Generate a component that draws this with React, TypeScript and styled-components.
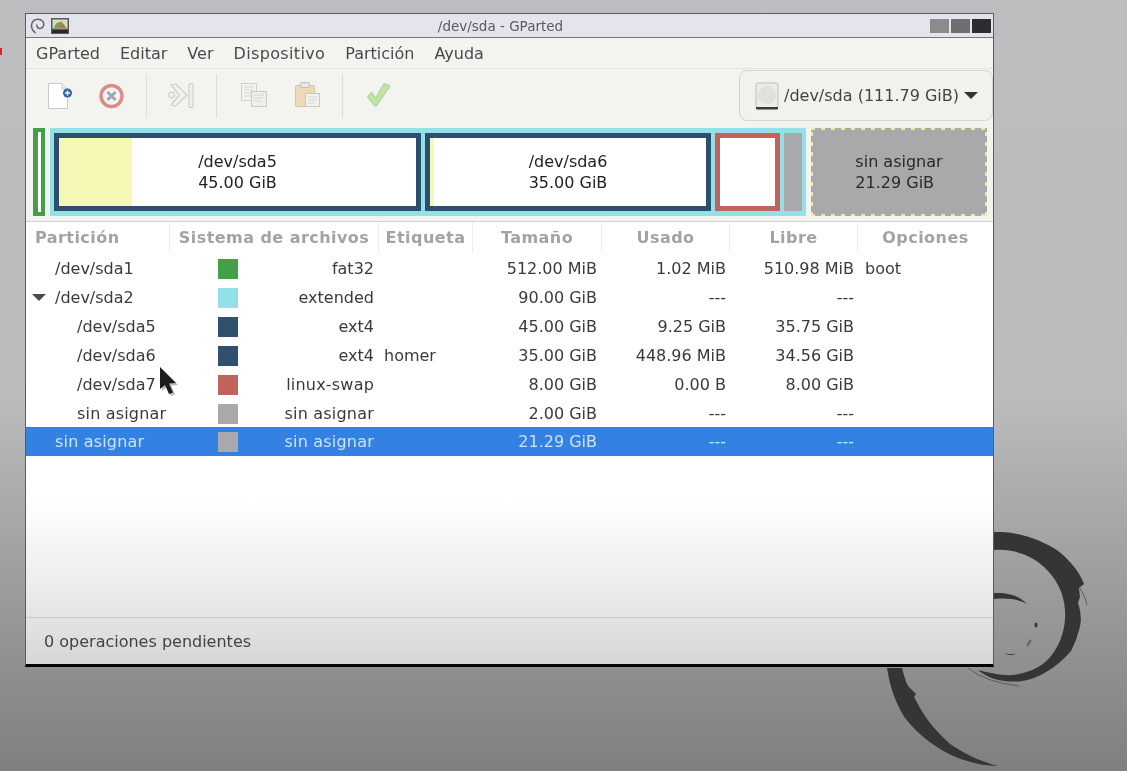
import React from "react";
import styled, { createGlobalStyle } from "styled-components";

const Global = createGlobalStyle`
  html, body { margin: 0; padding: 0; height: 100%; overflow: hidden; background: #999; }
  #root { height: 100%; }
  * { box-sizing: border-box; }
`;

const Desktop = styled.div`
  position: relative;
  height: 771px;
  padding: 13px 0 0 25px;
  background: linear-gradient(#bdbcbe 0, #bbbabc 52%, #7f7f7f 100%);
  font-family: "DejaVu Sans", sans-serif;
  font-size: 16px;
  overflow: hidden;
  filter: blur(0.35px);
`;

const Swirl = styled.svg`
  position: absolute;
  left: 880px;
  top: 520px;
  width: 230px;
  height: 251px;
`;

const RedMark = styled.div`
  position: absolute;
  left: 0;
  top: 48px;
  width: 2px;
  height: 7px;
  background: #e0202a;
`;

const Win = styled.div`
  position: relative;
  width: 969px;
  height: 654px;
  display: flex;
  flex-direction: column;
  border: 1px solid #5c5c5c;
  border-bottom: 3px solid #050505;
  background: #f3f3f0;
`;

const TitleBar = styled.div`
  height: 24px;
  flex: none;
  display: flex;
  align-items: center;
  padding: 0 2px 0 4px;
  background: #e4e4ee;
  border-bottom: 1px solid #777;
`;

const TitleIcons = styled.div`
  display: flex;
  align-items: center;
  gap: 6px;
  width: 200px;
`;

const TitleText = styled.div`
  flex: 1;
  text-align: center;
  font-size: 13.5px;
  color: #5a5a5a;
`;

const WinButtons = styled.div`
  width: 220px;
  display: flex;
  justify-content: flex-end;
  gap: 2px;
`;

const WinButton = styled.div<{ $c: string }>`
  width: 19px;
  height: 14px;
  background: ${(p) => p.$c};
`;

const MenuBar = styled.div`
  height: 31px;
  flex: none;
  display: flex;
  align-items: center;
  gap: 20px;
  padding: 1px 0 0 10px;
  color: #4a4a4a;
  border-bottom: 1px solid #e2e2de;
`;

const MenuItem = styled.span<{ $track?: number }>`
  letter-spacing: ${(p) => p.$track ?? 0}px;
`;

const Toolbar = styled.div`
  height: 54px;
  flex: none;
  display: flex;
  align-items: flex-start;
  padding: 0 0 0 9px;
`;

const ToolGroup = styled.div`
  display: flex;
  gap: 3px;
  height: 50px;
  margin-left: 2px;
`;

const ToolButton = styled.div`
  width: 51px;
  height: 54px;
  display: flex;
  align-items: center;
  justify-content: center;
`;

const Sep = styled.div`
  width: 1px;
  height: 44px;
  margin: 5px 9px 0;
  background: #dcdcd8;
`;

const Combo = styled.div`
  margin-left: auto;
  margin-top: 1px;
  width: 254px;
  height: 51px;
  display: flex;
  align-items: center;
  gap: 5px;
  padding-left: 15px;
  border: 1px solid #d6d6d1;
  border-radius: 8px;
  background: #f1f1ee;
  color: #444;
  white-space: nowrap;
`;

const ComboArrow = styled.div`
  width: 0;
  height: 0;
  border-left: 7px solid transparent;
  border-right: 7px solid transparent;
  border-top: 7px solid #333;
`;

const BarArea = styled.div`
  height: 99px;
  flex: none;
  display: flex;
  align-items: flex-start;
  padding: 5px 0 0 7px;
  border-bottom: 1px solid #d4d4d0;
`;

const Primary = styled.div`
  width: 12px;
  height: 88px;
  border: 4px solid #43a047;
  border-left-width: 5px;
  background: #fff;
`;

const Extended = styled.div`
  margin-left: 5px;
  width: 756px;
  height: 88px;
  display: flex;
  gap: 4px;
  padding: 5px 4px;
  background: #93e0e6;
`;

const Part = styled.div<{ $w: number; $c: string }>`
  position: relative;
  width: ${(p) => p.$w}px;
  height: 78px;
  border: 5px solid ${(p) => p.$c};
  background: #fff;
  display: flex;
`;

const UsedFill = styled.div<{ $w: number }>`
  width: ${(p) => p.$w}px;
  background: #f7f7b6;
  flex: none;
`;

const PartLabel = styled.div<{ $shift: number }>`
  flex: 1;
  margin-left: ${(p) => -p.$shift}px;
  display: flex;
  justify-content: center;
  align-items: center;
  color: #222;
  line-height: 21px;
`;

const LabelLines = styled.div`
  text-align: left;
`;

const GrayChunk = styled.div`
  width: 18px;
  height: 78px;
  background: #a9a9ab;
`;

const Unalloc = styled.div`
  margin-left: 5px;
  width: 176px;
  height: 88px;
  display: flex;
  align-items: center;
  justify-content: center;
  line-height: 21px;
  color: #2a2a2a;
  background-color: #a9a9ab;
  background-image:
    repeating-linear-gradient(90deg, #eeeaa6 0 4px, transparent 4px 10px),
    repeating-linear-gradient(90deg, #eeeaa6 0 4px, transparent 4px 10px),
    repeating-linear-gradient(0deg, #eeeaa6 0 4px, transparent 4px 10px),
    repeating-linear-gradient(0deg, #eeeaa6 0 4px, transparent 4px 10px);
  background-size: 100% 2px, 100% 2px, 2px 100%, 2px 100%;
  background-position: 0 0, 0 100%, 0 0, 100% 0;
  background-repeat: no-repeat;
`;

const COLS = "144px 209px 94px 129px 128px 128px 135px";

const HeaderRow = styled.div`
  height: 32px;
  flex: none;
  display: grid;
  grid-template-columns: ${COLS};
  padding-bottom: 1px;
  background: #fff;
  font-weight: 700;
  color: #a3a3a3;
  letter-spacing: 0.45px;
`;

const HeadCell = styled.div<{ $left?: boolean }>`
  display: flex;
  align-items: center;
  justify-content: ${(p) => (p.$left ? "flex-start" : "center")};
  padding-left: ${(p) => (p.$left ? "9px" : "0")};
  border-right: 1px solid #ececec;
  white-space: nowrap;
  &:last-child { border-right: 0; }
`;

const List = styled.div`
  flex: 1;
  min-height: 0;
  background: linear-gradient(#fff 0, #fff 68%, #e5e5e3 100%);
`;

const Row = styled.div<{ $sel?: boolean }>`
  height: 29px;
  margin-top: ${(p) => (p.$sel ? "-1px" : "0")};
  display: grid;
  grid-template-columns: ${COLS};
  align-items: center;
  color: ${(p) => (p.$sel ? "#cfe2fa" : "#3a3a3a")};
  background: ${(p) => (p.$sel ? "#3381e3" : "transparent")};
`;

const NameCell = styled.div<{ $depth: number }>`
  position: relative;
  padding-left: ${(p) => (p.$depth ? 51 : 29)}px;
  white-space: nowrap;
`;

const Expander = styled.div`
  position: absolute;
  left: 6px;
  top: 6px;
  width: 0;
  height: 0;
  border-left: 7px solid transparent;
  border-right: 7px solid transparent;
  border-top: 7px solid #4a4a4a;
`;

const FsCell = styled.div`
  display: flex;
  align-items: center;
  justify-content: space-between;
  padding: 0 5px 0 48px;
`;

const Swatch = styled.div<{ $c: string }>`
  width: 20px;
  height: 20px;
  background: ${(p) => p.$c};
`;

const FsName = styled.span<{ $track: number }>`
  letter-spacing: ${(p) => p.$track}px;
`;

const UnallocName = styled.span`
  letter-spacing: 0.18px;
`;

const LabelCell = styled.div`
  padding-left: 5px;
`;

const NumCell = styled.div<{ $pad: number }>`
  text-align: right;
  padding-right: ${(p) => p.$pad}px;
  white-space: nowrap;
`;

const FlagCell = styled.div`
  padding-left: 7px;
`;

const StatusBar = styled.div`
  height: 47px;
  flex: none;
  display: flex;
  align-items: center;
  padding-left: 18px;
  color: #444;
  border-top: 1px solid #c9c9c5;
  background: linear-gradient(#e4e4e2, #d6d6d4);
`;

const Pointer = styled.svg`
  position: absolute;
  left: 133px;
  top: 352px;
  width: 24px;
  height: 32px;
`;

const rows = [
  { n: "/dev/sda1", d: 0, c: "#43a047", fs: "fat32", l: "", s: "512.00 MiB", u: "1.02 MiB", f: "510.98 MiB", o: "boot" },
  { n: "/dev/sda2", d: 0, e: true, c: "#93e0e6", fs: "extended", l: "", s: "90.00 GiB", u: "---", f: "---", o: "" },
  { n: "/dev/sda5", d: 1, c: "#31506f", fs: "ext4", l: "", s: "45.00 GiB", u: "9.25 GiB", f: "35.75 GiB", o: "" },
  { n: "/dev/sda6", d: 1, c: "#31506f", fs: "ext4", l: "homer", s: "35.00 GiB", u: "448.96 MiB", f: "34.56 GiB", o: "" },
  { n: "/dev/sda7", d: 1, c: "#c1635a", fs: "linux-swap", l: "", s: "8.00 GiB", u: "0.00 B", f: "8.00 GiB", o: "" },
  { n: "sin asignar", d: 1, c: "#a9a9ab", fs: "sin asignar", l: "", s: "2.00 GiB", u: "---", f: "---", o: "" },
  { n: "sin asignar", d: 0, c: "#a9a9ab", fs: "sin asignar", l: "", s: "21.29 GiB", u: "---", f: "---", o: "", sel: true },
];

const IconNew = () => (
  <svg width="32" height="32" viewBox="0 0 32 32">
    <path d="M3.5 3.5H17L22.5 9V28.5H3.5Z" fill="#fff" stroke="#c9c9c6" />
    <path d="M17 3.5V9H22.5" fill="#e8e8e6" stroke="#d2d2cf" />
    <circle cx="22.5" cy="13" r="4.5" fill="#2c66a6" />
    <path d="M20 13H25M22.5 10.5V15.5" stroke="#fff" strokeWidth="1.4" />
  </svg>
);

const IconCancel = () => (
  <svg width="32" height="32" viewBox="0 0 32 32">
    <circle cx="15.5" cy="16" r="10.5" fill="#f4f4f2" stroke="#dc8a8a" strokeWidth="3.4" />
    <path d="M11.5 12L19.5 20M19.5 12L11.5 20" stroke="#a3a6a8" strokeWidth="3" />
  </svg>
);

const IconApply = () => (
  <svg width="32" height="32" viewBox="0 0 32 32">
    <circle cx="5.5" cy="15" r="2.8" fill="#f2f2f0" stroke="#cfcfcb" strokeWidth="1.2" />
    <path d="M5 5L9.5 4 21 15 9.5 26 5 25 13.5 15Z" fill="#f2f2f0" stroke="#cfcfcb" strokeWidth="1.2" strokeLinejoin="round" />
    <rect x="23" y="3.5" width="4" height="24" rx="1" fill="#eeeeeb" stroke="#c8c8c4" />
  </svg>
);

const IconCopy = () => (
  <svg width="32" height="32" viewBox="0 0 32 32">
    <rect x="3.5" y="3.5" width="15" height="17" fill="#f2f2f0" stroke="#cfcfcb" />
    <path d="M6 7H16M6 10H16M6 13H16M6 16H13" stroke="#d6d6d2" />
    <rect x="13.5" y="11.5" width="15" height="15" fill="#efefec" stroke="#c8c8c4" />
    <path d="M16 15H26M16 18H26M16 21H24" stroke="#d6d6d2" />
  </svg>
);

const IconPaste = () => (
  <svg width="32" height="32" viewBox="0 0 32 32">
    <rect x="3.5" y="5.5" width="19" height="21" rx="1" fill="#ecd9b6" stroke="#d6c4a2" />
    <rect x="8.5" y="2.5" width="9" height="5" rx="1" fill="#e6e6e3" stroke="#bdbdb9" />
    <rect x="13.5" y="13.5" width="14" height="13" fill="#f2f2f0" stroke="#c8c8c4" />
    <path d="M16 17H25M16 20H25M16 23H23" stroke="#d6d6d2" />
  </svg>
);

const IconCheck = () => (
  <svg width="32" height="32" viewBox="0 0 32 32">
    <path d="M5.5 17L9.5 12 13.5 18 22 3.5 28 6 14.5 26H12.5Z" fill="#bfe4a5" stroke="#a8cf92" strokeWidth="1" strokeLinejoin="round" />
  </svg>
);

const IconDisk = () => (
  <svg width="24" height="28" viewBox="0 0 24 28">
    <rect x="1" y="1" width="22" height="25" rx="2" fill="#ebebe8" stroke="#bcbcb8" />
    <circle cx="12" cy="13" r="9" fill="#e0e0dd" />
    <path d="M1 25H23V26.5Q23 27.5 22 27.5H2Q1 27.5 1 26.5Z" fill="#3a3a3a" />
  </svg>
);

const IconDebianSmall = () => (
  <svg width="15" height="16" viewBox="0 0 15 16">
    <path d="M5.5 15C1.5 12.5 .5 7.5 2.5 4 4.5 .8 9.5 .2 12.5 3 14.8 5.8 13.8 9.8 10.5 10.5 8.2 10.8 6.5 9 7 6.5" fill="none" stroke="#666" strokeWidth="1.5" />
  </svg>
);

const IconApp = () => (
  <svg width="18" height="16" viewBox="0 0 18 16">
    <rect x="0" y="0" width="18" height="16" fill="#5a5a52" />
    <rect x="1.5" y="1.5" width="15" height="9" fill="#d8dcc8" />
    <path d="M3 10C4 5 8 3 11 4L15 9 15 10Z" fill="#7da24f" />
    <path d="M8 5L14 8 14 10 9 9Z" fill="#c96a4a" />
    <rect x="1" y="12" width="16" height="3" fill="#2a2a2a" />
  </svg>
);

export default function App() {
  return (
    <Desktop>
      <Global />
      <RedMark />
      <Swirl viewBox="880 520 230 251">
        <g fill="#353437">
          <path d="M975 534C985 532 1000 531 1012 533C1030 536 1055 545 1068 560C1076 568 1081 576 1084 584L1079 588 1080 597 1078 603C1081 612 1082 622 1079 630L1076 640 1071 651C1063 660 1055 667 1046 672C1034 680 1018 683 1005 681C995 680 985 676 978 670C990 673 1003 676 1013 675C1030 673 1045 666 1054 652C1062 640 1066 625 1065 610C1064 590 1053 572 1035 560C1022 552 1008 549 994 550L975 552Z" />
          <path d="M887 668L902 668C904 676 906 682 908 686L916 694 914 697 920 708C928 722 938 733 950 744C962 752 978 761 998 766C985 766 972 763 958 758C938 750 918 735 905 718C896 704 890 688 887 668Z" />
          <path d="M985 594C1000 592 1015 592 1027 604C1015 597 1000 598 985 600Z" />
          <ellipse cx="1036" cy="625" rx="1.5" ry="2.5" />
          <ellipse cx="1029" cy="643" rx="1.5" ry="4" transform="rotate(30 1029 643)" fill="#6c6c6e" />
          <path d="M1004 653Q1010 655 1016 653.5 1011 657 1004 653Z" />
        </g>
        <g fill="none" stroke="#5c5c5e" strokeWidth="1">
          <path d="M968 668Q985 682 1019 686" />
          <path d="M1080 588Q1085 595 1087 605" />
          <path d="M1080 636Q1079 645 1076 653" stroke="#8f8f91" />
        </g>
      </Swirl>
      <Win>
        <TitleBar>
          <TitleIcons>
            <IconDebianSmall />
            <IconApp />
          </TitleIcons>
          <TitleText>/dev/sda - GParted</TitleText>
          <WinButtons>
            <WinButton $c="#8b8b8d" />
            <WinButton $c="#6e6e70" />
            <WinButton $c="#2c2c31" />
          </WinButtons>
        </TitleBar>
        <MenuBar>
          <MenuItem>GParted</MenuItem>
          <MenuItem>Editar</MenuItem>
          <MenuItem>Ver</MenuItem>
          <MenuItem $track={0.36}>Dispositivo</MenuItem>
          <MenuItem>Partición</MenuItem>
          <MenuItem>Ayuda</MenuItem>
        </MenuBar>
        <Toolbar>
          <ToolButton><IconNew /></ToolButton>
          <ToolButton><IconCancel /></ToolButton>
          <Sep />
          <ToolButton><IconApply /></ToolButton>
          <Sep />
          <ToolGroup>
            <ToolButton><IconCopy /></ToolButton>
            <ToolButton><IconPaste /></ToolButton>
          </ToolGroup>
          <Sep />
          <ToolButton><IconCheck /></ToolButton>
          <Combo>
            <IconDisk />
            <span>/dev/sda (111.79 GiB)</span>
            <ComboArrow />
          </Combo>
        </Toolbar>
        <BarArea>
          <Primary />
          <Extended>
            <Part $w={367} $c="#2d4f6e">
              <UsedFill $w={73} />
              <PartLabel $shift={73}>
                <LabelLines>/dev/sda5<br />45.00 GiB</LabelLines>
              </PartLabel>
            </Part>
            <Part $w={286} $c="#2d4f6e">
              <UsedFill $w={4} />
              <PartLabel $shift={4}>
                <LabelLines>/dev/sda6<br />35.00 GiB</LabelLines>
              </PartLabel>
            </Part>
            <Part $w={65} $c="#c1635a" />
            <GrayChunk />
          </Extended>
          <Unalloc>
            <LabelLines>sin asignar<br />21.29 GiB</LabelLines>
          </Unalloc>
        </BarArea>
        <HeaderRow>
          <HeadCell $left>Partición</HeadCell>
          <HeadCell>Sistema de archivos</HeadCell>
          <HeadCell>Etiqueta</HeadCell>
          <HeadCell>Tamaño</HeadCell>
          <HeadCell>Usado</HeadCell>
          <HeadCell>Libre</HeadCell>
          <HeadCell>Opciones</HeadCell>
        </HeaderRow>
        <List>
          {rows.map((r, i) => (
            <Row key={i} $sel={r.sel}>
              <NameCell $depth={r.d}>
                {r.e && <Expander />}
                {r.n === "sin asignar" ? <UnallocName>{r.n}</UnallocName> : r.n}
              </NameCell>
              <FsCell>
                <Swatch $c={r.c} />
                <FsName $track={r.fs === "sin asignar" || r.fs === "linux-swap" ? 0.2 : 0}>{r.fs}</FsName>
              </FsCell>
              <LabelCell>{r.l}</LabelCell>
              <NumCell $pad={5}>{r.s}</NumCell>
              <NumCell $pad={4}>{r.u}</NumCell>
              <NumCell $pad={4}>{r.f}</NumCell>
              <FlagCell>{r.o}</FlagCell>
            </Row>
          ))}
        </List>
        <StatusBar>0 operaciones pendientes</StatusBar>
        <Pointer viewBox="0 0 24 32">
          <path d="M3 3L3 25 8 21 12 30 16 28.5 12 19.5 19 19Z" fill="#8a8a96" opacity="0.6" />
          <path d="M1 1L1 23 6 19 10 28 14 26.5 10 17.5 17 17Z" fill="#1c1c1e" />
        </Pointer>
      </Win>
    </Desktop>
  );
}
